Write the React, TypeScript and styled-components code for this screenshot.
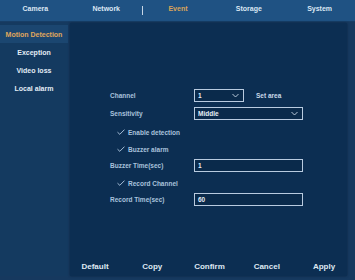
import styled, { createGlobalStyle } from "styled-components";

const Global = createGlobalStyle`
  html, body {
    margin: 0;
    padding: 0;
    background: #18406a;
    font-family: "Liberation Sans", Arial, sans-serif;
  }
`;

const Screen = styled.div`
  width: 355px;
  height: 280px;
  display: flex;
  flex-direction: column;
  background: #16395f;
  overflow: hidden;
`;

const TopBar = styled.div`
  height: 22px;
  box-sizing: border-box;
  display: flex;
  align-items: flex-start;
  padding-top: 5px;
  background: #1f5283;
  border-bottom: 1px solid #173e66;
`;

const Tab = styled.div<{ $active?: boolean }>`
  flex: 1;
  text-align: center;
  font-size: 7px;
  font-weight: 700;
  color: ${(p) => (p.$active ? "#d9a35a" : "#dbe7f3")};
`;

const TabDivider = styled.div`
  width: 1px;
  height: 9px;
  background: #c7d6e6;
  margin-top: 1px;
`;

const Body = styled.div`
  flex: 1;
  display: flex;
  padding: 1px 8px 4px 0;
`;

const Side = styled.div`
  width: 68px;
  display: flex;
  flex-direction: column;
  background: #143a60;
  padding-top: 2px;
`;

const SideItem = styled.div<{ $active?: boolean }>`
  height: 18px;
  display: flex;
  align-items: center;
  justify-content: center;
  font-size: 7px;
  font-weight: 700;
  color: ${(p) => (p.$active ? "#e0a75c" : "#e3ecf6")};
  background: ${(p) => (p.$active ? "#1b4670" : "transparent")};
`;

const Panel = styled.div`
  flex: 1;
  display: flex;
  flex-direction: column;
  background: #0c2e52;
  margin-left: 2px;
  box-shadow: 0 0 2px #0a2440;
`;

const Form = styled.div`
  flex: 1;
  display: flex;
  flex-direction: column;
  padding: 64px 0 0 40px;
`;

const Row = styled.div<{ $h?: number }>`
  display: flex;
  align-items: center;
  height: ${(p) => p.$h ?? 17}px;
`;

const Label = styled.div`
  width: 84px;
  font-size: 6.5px;
  font-weight: 700;
  color: #a9c2dc;
`;

const CheckLabel = styled.div`
  display: flex;
  align-items: center;
  gap: 3px;
  padding-left: 7px;
  font-size: 6.5px;
  font-weight: 700;
  color: #a9c2dc;
`;

const Field = styled.div<{ $w: number }>`
  width: ${(p) => p.$w}px;
  height: 13px;
  box-sizing: border-box;
  border: 1px solid #b9cbe0;
  background: #0a2a4b;
  display: flex;
  align-items: center;
  justify-content: space-between;
  padding: 0 4px 0 3px;
  font-size: 6.5px;
  font-weight: 700;
  color: #e6eef7;
`;

const Aside = styled.div`
  margin-left: 12px;
  font-size: 6.5px;
  font-weight: 700;
  color: #c9d8e8;
`;

const Buttons = styled.div`
  height: 20px;
  display: flex;
  align-items: center;
  justify-content: space-between;
  padding: 0 5px 0 7px;
`;

const Btn = styled.div`
  width: 36px;
  text-align: center;
  font-size: 8px;
  font-weight: 700;
  color: #dfe8f2;
`;

const Chevron = () => (
  <svg width="7" height="5" viewBox="0 0 7 5">
    <path d="M0.5 1 L3.5 4 L6.5 1" fill="none" stroke="#c9d8e8" strokeWidth="0.9" />
  </svg>
);

const Check = () => (
  <svg width="8" height="6" viewBox="0 0 8 6">
    <path d="M0.5 3.2 L2.8 5.3 L7.5 0.6" fill="none" stroke="#b9cfe6" strokeWidth="0.9" />
  </svg>
);

export default function App() {
  return (
    <Screen>
      <Global />
      <TopBar>
        <Tab>Camera</Tab>
        <Tab>Network</Tab>
        <TabDivider />
        <Tab $active>Event</Tab>
        <Tab>Storage</Tab>
        <Tab>System</Tab>
      </TopBar>
      <Body>
        <Side>
          <SideItem $active>Motion Detection</SideItem>
          <SideItem>Exception</SideItem>
          <SideItem>Video loss</SideItem>
          <SideItem>Local alarm</SideItem>
        </Side>
        <Panel>
          <Form>
            <Row>
              <Label>Channel</Label>
              <Field $w={50}>
                1<Chevron />
              </Field>
              <Aside>Set area</Aside>
            </Row>
            <Row $h={18}>
              <Label>Sensitivity</Label>
              <Field $w={109}>
                Middle<Chevron />
              </Field>
            </Row>
            <Row $h={20}>
              <CheckLabel>
                <Check />
                Enable detection
              </CheckLabel>
            </Row>
            <Row $h={14}>
              <CheckLabel>
                <Check />
                Buzzer alarm
              </CheckLabel>
            </Row>
            <Row $h={18}>
              <Label>Buzzer Time(sec)</Label>
              <Field $w={109}>1</Field>
            </Row>
            <Row $h={18}>
              <CheckLabel>
                <Check />
                Record Channel
              </CheckLabel>
            </Row>
            <Row $h={14}>
              <Label>Record Time(sec)</Label>
              <Field $w={109}>60</Field>
            </Row>
          </Form>
          <Buttons>
            <Btn>Default</Btn>
            <Btn>Copy</Btn>
            <Btn>Confirm</Btn>
            <Btn>Cancel</Btn>
            <Btn>Apply</Btn>
          </Buttons>
        </Panel>
      </Body>
    </Screen>
  );
}
